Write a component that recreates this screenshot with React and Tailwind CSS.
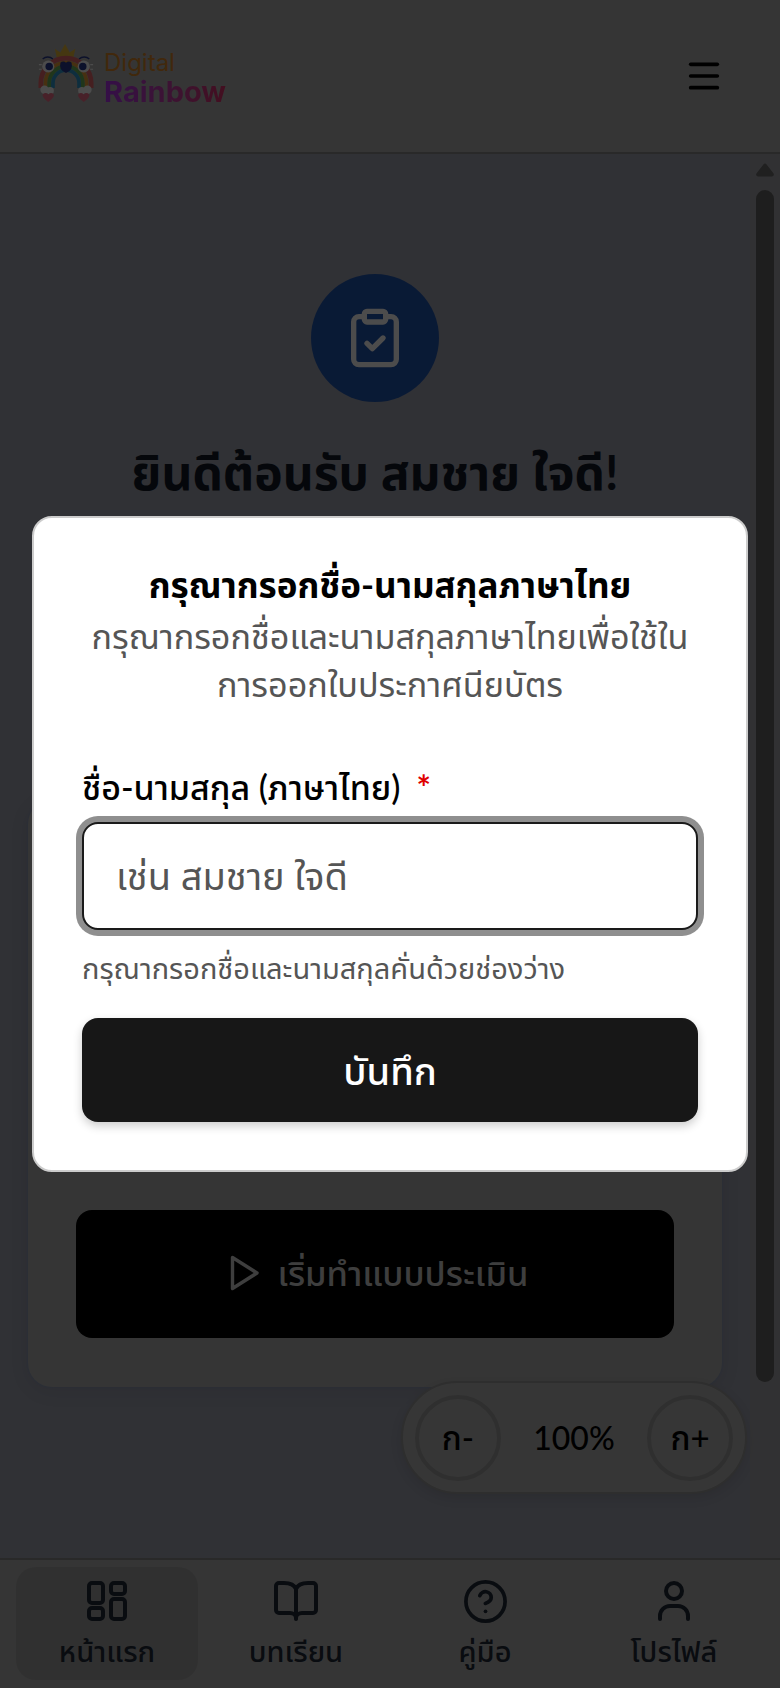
import React from "react";
import { Menu, ClipboardCheck, CircleHelp } from "lucide-react";

function Logo() {
  return (
    <svg className="ml-[2px] -mt-[6px]" width="56" height="60" viewBox="0 -1 60 64" fill="none">
      <path d="M20 14 L18 5 L24 9 L29 0 L34 9 L40 5 L38 14 Z" fill="#e8b93a" />
      <path d="M3 47 V42 a27 27 0 0 1 54 0 V47" stroke="#e8686c" strokeWidth="5" />
      <path d="M8 47 V42 a22 22 0 0 1 44 0 V47" stroke="#eda03a" strokeWidth="4" />
      <path d="M12 47 V42 a18 18 0 0 1 36 0 V47" stroke="#6cb45a" strokeWidth="4" />
      <path d="M16 47 V42 a14 14 0 0 1 28 0 V47" stroke="#2f9bd0" strokeWidth="4" />
      <circle cx="7" cy="49" r="4.5" fill="#fff" />
      <circle cx="13" cy="50" r="4" fill="#fff" />
      <circle cx="53" cy="49" r="4.5" fill="#fff" />
      <circle cx="47" cy="50" r="4" fill="#fff" />
      <circle cx="11" cy="24" r="6.5" fill="#fff" />
      <circle cx="49" cy="24" r="6.5" fill="#fff" />
      <circle cx="12" cy="24" r="4" fill="#2b3a8f" />
      <circle cx="48" cy="24" r="4" fill="#2b3a8f" />
      <path d="M5 16 a8 8 0 0 1 11 0 M44 16 a8 8 0 0 1 11 0" stroke="#2b3a8f" strokeWidth="1.5" />
      <path d="M1 22 h3 M1 27 h3 M56 22 h3 M56 27 h3" stroke="#fff" strokeWidth="1.2" />
      <path d="M24 20 a4 4 0 0 1 6 0 a4 4 0 0 1 6 0 q2 8 -6 11 q-8 -3 -6 -11Z" fill="#2b3a8f" />
      <path d="M11 62 q-7 -5 -6 -8 q3 -3 6 0 q3 -3 6 0 q1 3 -6 8Z M49 62 q-7 -5 -6 -8 q3 -3 6 0 q3 -3 6 0 q1 3 -6 8Z" fill="#f0708a" />
    </svg>
  );
}

function BookIcon() {
  return (
    <svg width="44" height="40" viewBox="0 0 44 40" fill="none" stroke="#1f2937" strokeWidth="4" strokeLinecap="round" strokeLinejoin="round">
      <path d="M22 8 C20 3 15 2 10 2 H5 a3 3 0 0 0 -3 3 V29 a3 3 0 0 0 3 3 H16 c3 0 6 2 6 5 c0 -3 3 -5 6 -5 H39 a3 3 0 0 0 3 -3 V5 a3 3 0 0 0 -3 -3 H34 C29 2 24 3 22 8 Z" />
      <path d="M22 8 V38" />
    </svg>
  );
}

function DashIcon() {
  return (
    <svg width="40" height="40" viewBox="0 0 40 40" fill="none" stroke="#1f2937" strokeWidth="4" strokeLinejoin="round">
      <rect x="2" y="2" width="14" height="20" rx="3" />
      <rect x="24" y="2" width="14" height="11" rx="3" />
      <rect x="24" y="18" width="14" height="20" rx="3" />
      <rect x="2" y="27" width="14" height="11" rx="3" />
    </svg>
  );
}

function UserIcon() {
  return (
    <svg width="32" height="40" viewBox="0 0 32 40" fill="none" stroke="#1f2937" strokeWidth="4" strokeLinecap="round">
      <circle cx="16" cy="10" r="8" />
      <path d="M2 38 V35 a10 10 0 0 1 10 -10 h8 a10 10 0 0 1 10 10 V38" />
    </svg>
  );
}

function PlayIcon() {
  return (
    <svg width="30" height="36" viewBox="0 0 30 36" fill="none" stroke="currentColor" strokeWidth="3.4" strokeLinejoin="round">
      <path d="M2.5 2.5 L27 18 L2.5 33.5 Z" />
    </svg>
  );
}

function ScrollUp() {
  return (
    <svg width="18" height="14" viewBox="0 0 18 14" fill="#6b6b6b">
      <path d="M9 0.5 q1 0 1.6 1 L17.6 10.5 q1 2.5 -1.5 3 H1.9 q-2.5 -0.5 -1.5 -3 L7.4 1.5 q0.6 -1 1.6 -1Z" />
    </svg>
  );
}

const tabs = [
  { label: "หน้าแรก", icon: <DashIcon />, active: true },
  { label: "บทเรียน", icon: <BookIcon /> },
  { label: "คู่มือ", icon: <CircleHelp size={47} strokeWidth={1.9} color="#1f2937" /> },
  { label: "โปรไฟล์", icon: <UserIcon /> },
];

export default function App() {
  return (
    <div className="relative flex h-[1688px] w-[780px] flex-col overflow-hidden bg-white font-['Lato','Noto_Sans_Thai',sans-serif] text-black">
      <header className="flex h-[154px] shrink-0 items-center justify-between border-b-2 border-[#8a8a8a] bg-[#b2b2b2] pl-[36px] pr-[56px]">
        <div className="flex items-center gap-[10px]">
          <Logo />
          <div className="flex flex-col pt-[4px] font-['Inter',sans-serif] leading-none">
            <span className="text-[24px] font-normal text-[#d9852a]">Digital</span>
            <span className="mt-[2px] bg-gradient-to-r from-[#b030f0] to-[#e0306a] bg-clip-text text-[29px] font-bold text-transparent">Rainbow</span>
          </div>
        </div>
        <Menu size={40} strokeWidth={2.2} color="#000" />
      </header>

      <main className="flex min-h-0 flex-1 bg-[#a0a3b1]">
        <div className="flex w-[750px] flex-col items-center pt-[120px]">
          <div className="flex h-[128px] w-[128px] items-center justify-center rounded-full bg-[#2157b1]">
            <ClipboardCheck size={64} strokeWidth={2} color="#fff" />
          </div>
          <h1 className="mt-[38px] text-[48px] font-bold leading-[64px] text-[#111827]">ยินดีต้อนรับ สมชาย ใจดี!</h1>
          <div className="mt-[296px] flex h-[587px] w-[694px] flex-col justify-end rounded-[24px] bg-[#b2b2b2] px-[48px] pb-[49px] shadow-[0_0_3px_#8095c0,0_4px_20px_rgba(0,0,0,0.08)]">
            <button className="flex h-[128px] w-full items-center justify-center gap-[18px] rounded-[16px] bg-black pb-[2px] pl-[8px] text-[34.5px] font-medium text-[#d0d0d0]">
              <PlayIcon />
              เริ่มทำแบบประเมิน
            </button>
          </div>
        </div>
        <div className="flex w-[30px] flex-col items-center bg-[#a6a6ac] pt-[9px]">
          <ScrollUp />
          <div className="mt-[13px] h-[1192px] w-[18px] rounded-full bg-[#666]" />
        </div>
      </main>

      <nav className="grid h-[130px] shrink-0 grid-cols-[182px_182px_182px_182px] gap-x-[7px] border-t-2 border-[#8a8a8a] bg-[#b2b2b2] px-[16px] pt-[7px]">
        {tabs.map((t) => (
          <div key={t.label} className={`flex h-[113px] flex-col items-center rounded-[20px] ${t.active ? "bg-[#a2a2a2]" : ""}`}>
            <div className="flex h-[62px] items-center pt-[6px]">{t.icon}</div>
            <span className="text-[29px] font-medium leading-[44px] text-[#1f2937]">{t.label}</span>
          </div>
        ))}
      </nav>

      <div className="absolute left-[401px] top-[1381px] flex h-[113px] w-[346px] items-center justify-between rounded-full border-2 border-[#999] bg-[#b6b6b6] px-[12px] shadow-[0_4px_12px_rgba(0,0,0,0.1)]">
        <div className="flex h-[86px] w-[86px] items-center justify-center rounded-full border-4 border-[#9e9e9e] text-[33px] font-medium">ก-</div>
        <span className="text-[32px] font-medium">100%</span>
        <div className="flex h-[86px] w-[86px] items-center justify-center rounded-full border-4 border-[#9e9e9e] text-[33px] font-medium">ก+</div>
      </div>

      <div className="absolute inset-0 bg-black/70" />

      <div className="absolute left-[32px] top-[516px] flex h-[656px] w-[716px] flex-col rounded-[20px] border-2 border-[#ccc] bg-white px-[48px] pt-[38px]">
        <h2 className="text-center text-[35px] font-bold leading-[56px] text-black">กรุณากรอกชื่อ-นามสกุลภาษาไทย</h2>
        <p className="text-center text-[34.2px] leading-[48px] text-[#555]">กรุณากรอกชื่อและนามสกุลภาษาไทยเพื่อใช้ในการออกใบประกาศนียบัตร</p>
        <label className="mt-[56px] flex gap-[16px] text-[34px] font-medium leading-[46px] text-black">
          ชื่อ-นามสกุล (ภาษาไทย)
          <span className="font-bold text-[#e00000]">*</span>
        </label>
        <input
          readOnly
          placeholder="เช่น สมชาย ใจดี"
          className="mt-[12px] h-[108px] w-full rounded-[16px] border-2 border-[#1a1a1a] bg-white px-[32px] pb-[2px] text-[38px] shadow-[0_0_0_6px_#8f8f8f] outline-none placeholder:text-[#555]"
        />
        <p className="mt-[16px] text-[29px] leading-[44px] text-[#555]">กรุณากรอกชื่อและนามสกุลคั่นด้วยช่องว่าง</p>
        <button className="mt-[28px] h-[104px] w-full rounded-[16px] bg-[#171717] text-[38px] font-medium text-white shadow-[0_4px_10px_rgba(0,0,0,0.2)]">บันทึก</button>
      </div>
    </div>
  );
}
